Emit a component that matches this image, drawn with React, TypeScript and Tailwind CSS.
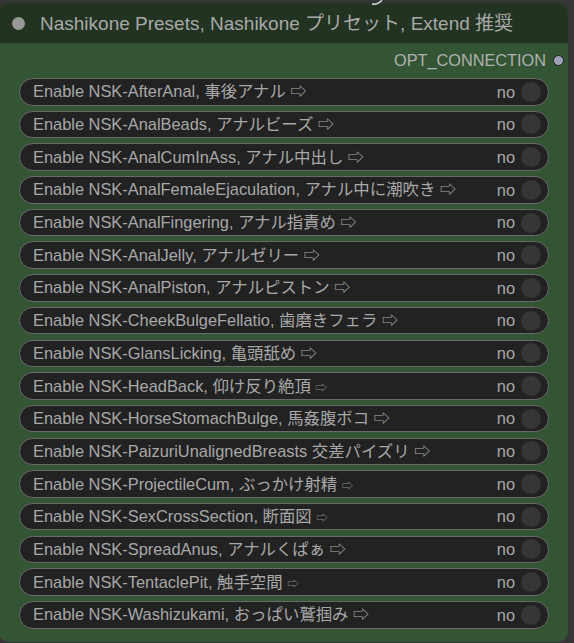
const rows: { label: string; small?: boolean }[] = [
  { label: 'Enable NSK-AfterAnal, 事後アナル' },
  { label: 'Enable NSK-AnalBeads, アナルビーズ' },
  { label: 'Enable NSK-AnalCumInAss, アナル中出し' },
  { label: 'Enable NSK-AnalFemaleEjaculation, アナル中に潮吹き' },
  { label: 'Enable NSK-AnalFingering, アナル指責め' },
  { label: 'Enable NSK-AnalJelly, アナルゼリー' },
  { label: 'Enable NSK-AnalPiston, アナルピストン' },
  { label: 'Enable NSK-CheekBulgeFellatio, 歯磨きフェラ' },
  { label: 'Enable NSK-GlansLicking, 亀頭舐め' },
  { label: 'Enable NSK-HeadBack, 仰け反り絶頂', small: true },
  { label: 'Enable NSK-HorseStomachBulge, 馬姦腹ボコ' },
  { label: 'Enable NSK-PaizuriUnalignedBreasts 交差パイズリ' },
  { label: 'Enable NSK-ProjectileCum, ぶっかけ射精', small: true },
  { label: 'Enable NSK-SexCrossSection, 断面図', small: true },
  { label: 'Enable NSK-SpreadAnus, アナルくぱぁ' },
  { label: 'Enable NSK-TentaclePit, 触手空間', small: true },
  { label: 'Enable NSK-Washizukami, おっぱい鷲掴み' },
]

function Toggle({ label, small }: { label: string; small?: boolean }) {
  return (
    <div className="flex h-[27.5px] items-center rounded-full border border-[#6a6a6a] bg-[#222222] pl-[13px] pr-[7px]">
      <span className="flex-1 truncate text-[16.4px] leading-none text-[#a8a8a8]">
        {label}{' '}
        {small ? (
          <span className="text-[11.5px] text-[#8a8a8a]">⇨</span>
        ) : (
          <span className="text-[16px]">⇨</span>
        )}
      </span>
      <span className="mr-[6px] text-[16.4px] leading-none text-[#a8a8a8]">no</span>
      <span className="h-[20px] w-[20px] rounded-full bg-[#363636]" />
    </div>
  )
}

export default function App() {
  return (
    <div
      className="relative h-[643px] w-[574px] overflow-hidden bg-[#353535]"
      style={{ fontFamily: '"Liberation Sans", Arial, "Noto Sans CJK JP", sans-serif' }}
    >
      <svg className="absolute left-[368px] top-0" width="16" height="6" viewBox="0 0 16 6">
        <path d="M14 0 Q10 5 4 4" stroke="#cfcfcf" strokeWidth="1.6" fill="none" />
      </svg>
      <div className="ml-[-1px] mt-[3px] flex h-[639px] w-[569px] flex-col overflow-hidden rounded-[10px] bg-[#335533]">
        <div className="flex h-[40px] items-center bg-[#223322] pl-[13px]">
          <span className="h-[13px] w-[13px] rounded-full bg-[#999999]" />
          <span className="ml-[15px] text-[19px] leading-none text-[#a8a8a8]">
            Nashikone Presets, Nashikone プリセット, Extend 推奨
          </span>
        </div>
        <div className="flex h-[35px] items-center justify-end pr-[4px]">
          <span className="text-[16.3px] leading-none text-[#b0b0b0]">OPT_CONNECTION</span>
          <span className="ml-[7px] h-[11px] w-[11px] rounded-full border border-[#1a1a1a] bg-[#a0a0b8]" />
        </div>
        <div className="flex flex-col gap-[5.2px] pl-[20px] pr-[19px]">
          {rows.map((r) => (
            <Toggle key={r.label} label={r.label} small={r.small} />
          ))}
        </div>
      </div>
    </div>
  )
}
